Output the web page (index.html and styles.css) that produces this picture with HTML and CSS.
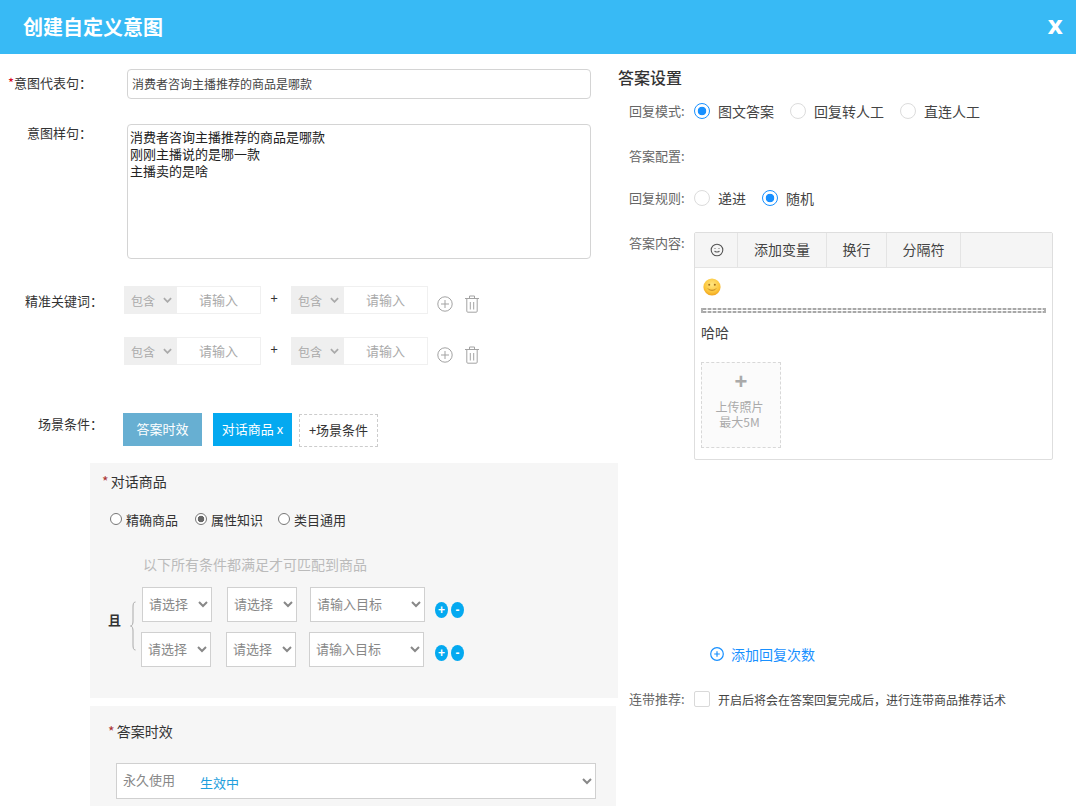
FILE: index.html
```html
<!DOCTYPE html>
<html lang="zh-CN">
<head>
<meta charset="utf-8">
<title>创建自定义意图</title>
<link rel="stylesheet" href="styles.css">
</head>
<body>
<div class="dialog">
  <header class="head">
    <h1 class="title">创建自定义意图</h1>
    <span class="close">x</span>
  </header>
  <div class="main">
    <section class="left">
      <div class="row row-rep">
        <label class="lbl lbl-a"><i class="req">*</i>意图代表句：</label>
        <input class="rep-input" type="text" value="消费者咨询主播推荐的商品是哪款">
      </div>
      <div class="row row-sample">
        <label class="lbl lbl-a">意图样句：</label>
        <textarea class="sample">消费者咨询主播推荐的商品是哪款
刚刚主播说的是哪一款
主播卖的是啥</textarea>
      </div>
      <div class="row row-kw">
        <label class="lbl lbl-b lbl-kw">精准关键词：</label>
        <div class="kw">
          <span class="kw-sel">包含<svg class="chev" viewBox="0 0 10 6"><path d="M1 1l4 4 4-4"/></svg></span><span class="kw-in">请输入</span>
        </div>
        <span class="kw-plus">+</span>
        <div class="kw">
          <span class="kw-sel">包含<svg class="chev" viewBox="0 0 10 6"><path d="M1 1l4 4 4-4"/></svg></span><span class="kw-in">请输入</span>
        </div>
        <svg class="ico-add" viewBox="0 0 16 16"><circle cx="8" cy="8" r="7.2"/><path d="M8 4v8M4 8h8"/></svg>
        <svg class="ico-del" viewBox="0 0 16 18"><path d="M1 3.5h14M5.5 3V1h5v2M2.8 4v12.2c0 .6.4 1 1 1h8.4c.6 0 1-.4 1-1V4M6.3 7v7.5M9.7 7v7.5"/></svg>
      </div>
      <div class="row row-kw row-kw2">
        <div class="kw">
          <span class="kw-sel">包含<svg class="chev" viewBox="0 0 10 6"><path d="M1 1l4 4 4-4"/></svg></span><span class="kw-in">请输入</span>
        </div>
        <span class="kw-plus">+</span>
        <div class="kw">
          <span class="kw-sel">包含<svg class="chev" viewBox="0 0 10 6"><path d="M1 1l4 4 4-4"/></svg></span><span class="kw-in">请输入</span>
        </div>
        <svg class="ico-add" viewBox="0 0 16 16"><circle cx="8" cy="8" r="7.2"/><path d="M8 4v8M4 8h8"/></svg>
        <svg class="ico-del" viewBox="0 0 16 18"><path d="M1 3.5h14M5.5 3V1h5v2M2.8 4v12.2c0 .6.4 1 1 1h8.4c.6 0 1-.4 1-1V4M6.3 7v7.5M9.7 7v7.5"/></svg>
      </div>
      <div class="row row-scene">
        <label class="lbl lbl-b lbl-scene">场景条件：</label>
        <span class="tag tag-time">答案时效</span>
        <span class="tag tag-goods">对话商品 x</span>
        <span class="tag tag-add">+场景条件</span>
      </div>
      <div class="panel panel-goods">
        <div class="p-title"><i>*</i> 对话商品</div>
        <div class="p-radios">
          <label class="p-radio"><input type="radio" name="goods">精确商品</label>
          <label class="p-radio"><input type="radio" name="goods" checked>属性知识</label>
          <label class="p-radio"><input type="radio" name="goods">类目通用</label>
        </div>
        <p class="hint">以下所有条件都满足才可匹配到商品</p>
        <div class="conds">
          <b class="qie">且</b>
          <svg class="brace" viewBox="0 0 6 50"><path d="M5.5 1C3.5 1 3 3 3 6v14c0 3-.8 5-2.5 5 1.700 0 2.500 2 2.500 5v14c0 3 .5 5 2.500 5"/></svg>
          <div class="cond-list">
            <div class="cond">
              <select class="s-a"><option>请选择</option></select>
              <select class="s-a"><option>请选择</option></select>
              <select class="s-b"><option>请输入目标</option></select>
              <span class="round">+</span><span class="round">-</span>
            </div>
            <div class="cond cond-2">
              <select class="s-a"><option>请选择</option></select>
              <select class="s-a"><option>请选择</option></select>
              <select class="s-b"><option>请输入目标</option></select>
              <span class="round">+</span><span class="round">-</span>
            </div>
          </div>
        </div>
      </div>
      <div class="panel panel-time">
        <div class="p-title"><i>*</i> 答案时效</div>
        <div class="time-wrap">
          <select class="s-time"><option>永久使用</option></select>
          <span class="live">生效中</span>
        </div>
      </div>
    </section>
    <section class="right">
      <h2 class="r-title">答案设置</h2>
      <div class="r-row r-mode">
        <span class="r-lbl">回复模式:</span>
        <label class="opt"><span class="dot on"></span>图文答案</label>
        <label class="opt"><span class="dot"></span>回复转人工</label>
        <label class="opt"><span class="dot"></span>直连人工</label>
      </div>
      <div class="r-row r-conf"><span class="r-lbl">答案配置:</span></div>
      <div class="r-row r-rule">
        <span class="r-lbl">回复规则:</span>
        <label class="opt"><span class="dot"></span>递进</label>
        <label class="opt"><span class="dot on"></span>随机</label>
      </div>
      <div class="r-content">
        <span class="r-lbl r-lbl-top">答案内容:</span>
        <div class="editor">
          <div class="tools">
            <span class="tool tool-emo"><svg viewBox="0 0 14 14"><circle cx="7" cy="7" r="5.800"/><path d="M4.600 7.800c.5 1.600 4.300 1.600 4.800 0M5 5.200v.9M9 5.200v.9"/></svg></span>
            <span class="tool tool-var">添加变量</span>
            <span class="tool tool-br">换行</span>
            <span class="tool tool-sep">分隔符</span>
          </div>
          <div class="edit-body">
            <svg class="emoji" viewBox="0 0 18 18">
              <defs><radialGradient id="face" cx="50%" cy="35%" r="70%"><stop offset="0" stop-color="#ffe680"/><stop offset="0.65" stop-color="#fcc53a"/><stop offset="1" stop-color="#ec9a17"/></radialGradient></defs>
              <circle cx="9" cy="9" r="8.600" fill="url(#face)"/>
              <circle cx="6.200" cy="6.800" r="1" fill="#a5701c"/><circle cx="11.800" cy="6.800" r="1" fill="#a5701c"/>
              <path d="M5 10.600c1.500 2.200 6.500 2.200 8 0" fill="none" stroke="#b97a1a" stroke-width=".9"/>
            </svg>
            <div class="rule"></div>
            <p class="say">哈哈</p>
            <div class="upload">
              <span class="up-plus">+</span>
              <span>上传照片</span>
              <span>最大5M</span>
            </div>
          </div>
        </div>
      </div>
      <div class="add-times">
        <svg viewBox="0 0 14 14"><circle cx="7" cy="7" r="6.300"/><path d="M4.200 7h5.600M7 4.200v5.600"/></svg>
        <span>添加回复次数</span>
      </div>
      <div class="r-row r-link">
        <span class="r-lbl">连带推荐:</span>
        <span class="check"></span>
        <span class="link-text">开启后将会在答案回复完成后，进行连带商品推荐话术</span>
      </div>
    </section>
  </div>
</div>
</body>
</html>
```
FILE: styles.css
```css
* { box-sizing: border-box; }
html, body { margin: 0; padding: 0; }
body {
  width: 1076px;
  height: 806px;
  overflow: hidden;
  background: #fff;
  color: #333;
  font-family: "Noto Sans CJK SC", "Liberation Sans", sans-serif;
  font-size: 13px;
}
.dialog { width: 1076px; height: 806px; overflow: hidden; }
.head {
  height: 54px;
  background: #38baf5;
  display: flex;
  align-items: center;
  justify-content: space-between;
  padding: 0 13px 0 23px;
  color: #fff;
}
.title { margin: 0; font-size: 20px; font-weight: 700; line-height: 30px; }
.close { font: 700 24px/24px "DejaVu Sans", sans-serif; margin-top: -3px; }
.main { display: flex; align-items: flex-start; }

/* left column */
.left { width: 618px; flex: none; padding-top: 15px; }
.row { display: flex; align-items: flex-start; }
.lbl { flex: none; font-size: 13px; line-height: 20px; color: #333; white-space: nowrap; }
.lbl-a { width: 127px; padding-right: 35px; text-align: right; }
.req { color: #d9001b; font-style: normal; }
.row-rep .lbl { padding-top: 4px; }
.rep-input {
  width: 464px;
  height: 30px;
  border: 1px solid #d4d4d4;
  border-radius: 4px;
  padding: 0 4px 2px;
  font: 12px "Noto Sans CJK SC", sans-serif;
  color: #444;
  outline: none;
}
.row-sample { margin-top: 25px; }
.row-sample .lbl { margin-top: -1px; }
.sample {
  width: 464px;
  height: 135px;
  border: 1px solid #d4d4d4;
  border-radius: 4px;
  padding: 3px 2px;
  font: 13px/17px "Noto Sans CJK SC", sans-serif;
  color: #222;
  resize: none;
  outline: none;
}
.row-kw { margin-top: 27px; height: 28px; align-items: center; }
.row-kw2 { margin-top: 23px; padding-left: 124px; }
.lbl-b { width: 124px; text-align: left; }
.lbl-kw { padding-left: 25px; margin-top: 1px; }
.kw {
  display: flex;
  width: 137px;
  height: 100%;
  border: 1px solid #f0f0f0;
  background: #fff;
}
.kw-sel {
  width: 53px;
  flex: none;
  background: #efefef;
  color: #aaa;
  font-size: 12px;
  display: flex;
  align-items: center;
  padding-left: 7px;
  margin: -1px 0 -1px -1px;
}
.chev { width: 9px; height: 6px; margin-left: 8px; fill: none; stroke: #aaa; stroke-width: 2; }
.kw-in { flex: 1; text-align: center; color: #aaa; font-size: 13px; line-height: 26px; }
.kw-plus { width: 30px; text-align: center; color: #333; font-size: 13px; margin-top: -6px; padding-right: 4px; }
.ico-add { width: 16px; height: 16px; margin: 8px 0 0 9px; fill: none; stroke: #a3a3a3; stroke-width: 1; }
.ico-del { width: 16px; height: 18px; margin: 8px 0 0 11px; fill: none; stroke: #a3a3a3; stroke-width: 1; }
.row-scene { margin-top: 48px; align-items: flex-start; }
.lbl-scene { width: 123px; padding-left: 38px; margin-top: 1px; }
.tag {
  width: 79px;
  height: 33px;
  line-height: 32px;
  text-align: center;
  font-size: 13px;
  flex: none;
}
.tag-time { background: #67afd2; color: #fff; }
.tag-goods { background: #04a9f0; color: #fff; margin-left: 11px; }
.tag-add {
  margin: 1px 0 0 7px;
  border: 1px dashed #ccc;
  color: #333;
  line-height: 29px;
}
.panel { background: #f6f6f6; margin-left: 90px; }
.panel-goods { width: 528px; height: 235px; margin-top: 16px; padding-top: 8px; }
.p-title { font-size: 14px; line-height: 20px; color: #333; padding-left: 12px; }
.p-title i { font-style: normal; color: #a33; margin-right: -1px; }
.p-radios { display: flex; margin-top: 18px; padding-left: 20px; height: 20px; }
.p-radio { display: flex; align-items: center; font-size: 13px; color: #333; margin-right: 15px; }
.p-radio:first-child { margin-right: 17px; }
.p-radio input {
  appearance: none;
  width: 12px;
  height: 12px;
  margin: 0 4px 0 0;
  border: 1px solid #777;
  border-radius: 50%;
  background: #fff;
}
.p-radio input:checked { background: radial-gradient(circle, #666 0 3px, #fff 3.6px); }
.hint { margin: 25px 0 0 53px; color: #bbb; font-size: 14px; line-height: 20px; }
.conds { display: flex; margin-top: 13px; align-items: center; height: 80px; }
.qie { width: 12px; margin: -15px 10px 0 18px; font-size: 13px; color: #333; }
.brace { width: 6px; height: 50px; flex: none; fill: none; stroke: #aaa; stroke-width: 1; margin-top: -3px; }
.cond-list { margin-left: 5px; }
.cond { display: flex; align-items: center; height: 35px; margin-left: 1px; }
.cond-2 { margin: 10px 0 0 0; }
.conds select, .s-time {
  border: 1px solid #d0d0d0;
  background-color: #fff;
  color: #888;
  font: 13px "Noto Sans CJK SC", sans-serif;
  border-radius: 0;
  outline: none;
}
.s-a { width: 70px; height: 35px; margin-right: 15px; padding: 0 0 2px 2px; }
.s-a + .s-a { margin-right: 13px; }
.s-b { width: 115px; height: 35px; margin-right: 10px; padding: 0 0 2px 2px; }
.cond-2 .s-b { margin-right: 11px; }
.round {
  width: 13px;
  height: 16px;
  border-radius: 50%;
  background: #04a9f0;
  color: #fff;
  font: 700 12px/16px "Liberation Sans", sans-serif;
  text-align: center;
  margin-right: 3px;
  margin-top: 11px;
}
.cond-2 .round { margin-top: 7px; }
.panel-time { width: 526px; height: 100px; margin-top: 8px; padding-top: 15px; }
.panel-time .p-title { padding-left: 18px; }
.time-wrap { position: relative; margin: 22px 0 0 26px; width: 480px; }
.s-time { width: 480px; height: 36px; padding: 0 0 3px 2px; display: block; }
.live { position: absolute; left: 84px; top: 11px; color: #1e9fdd; font-size: 13px; line-height: 18px; }

/* right column */
.right { flex: 1; padding-top: 13px; }
.r-title { margin: 0; font-size: 16px; font-weight: 500; line-height: 20px; color: #333; }
.r-row { display: flex; align-items: center; margin-left: 11px; height: 20px; }
.r-lbl { width: 65px; flex: none; font-size: 13px; color: #666; line-height: 20px; }
.opt { display: flex; align-items: center; font-size: 14px; color: #444; margin-right: 16px; }
.dot {
  width: 16px;
  height: 16px;
  border: 1px solid #dcdcdc;
  border-radius: 50%;
  margin-right: 8px;
  background: #fff;
  flex: none;
}
.dot.on { border-color: #1890ff; background: radial-gradient(circle, #1890ff 0 4px, #fff 4.600px); }
.r-mode { margin-top: 14px; }
.r-conf { margin-top: 25px; }
.r-rule { margin-top: 22px; }
.r-content { display: flex; margin: 24px 0 0 11px; }
.r-lbl-top { margin-top: 1px; }
.editor { width: 359px; height: 228px; border: 1px solid #dedede; border-radius: 2px; }
.tools {
  display: flex;
  height: 35px;
  background: #f5f5f5;
  border-bottom: 1px solid #e4e4e4;
}
.tool {
  display: flex;
  align-items: center;
  justify-content: center;
  font-size: 14px;
  color: #444;
  border-right: 1px solid #e4e4e4;
  padding-bottom: 2px;
}
.tool-emo { width: 43px; padding: 0 0 0 2px; }
.tool-emo svg { width: 14px; height: 14px; fill: none; stroke: #555; stroke-width: 1.100; }
.tool-var { width: 89px; }
.tool-br { width: 60px; }
.tool-sep { width: 74px; }
.edit-body { padding: 10px 6px 0; }
.emoji { display: block; width: 18px; height: 18px; margin-left: 2px; }
.rule {
  height: 5px;
  margin-top: 12px;
  border-left: 2px solid #b0b0b0;
  border-right: 2px solid #b0b0b0;
  background:
    repeating-linear-gradient(90deg, #a8a8a8 0 3px, #dedede 3px 5px) top / 100% 2px no-repeat,
    repeating-linear-gradient(90deg, #a8a8a8 0 3px, #dedede 3px 5px) bottom / 100% 2px no-repeat;
}
.say { margin: 9px 0 0; font-size: 14px; line-height: 20px; color: #444; }
.upload {
  width: 80px;
  height: 86px;
  margin-top: 20px;
  border: 1px dashed #d8d8d8;
  background: #fbfbfb;
  color: #aaa;
  font-size: 12px;
  line-height: 15px;
  display: flex;
  flex-direction: column;
  align-items: center;
  padding: 9px 3px 0 0;
}
.up-plus { font: 700 22px/20px "Liberation Sans", sans-serif; margin: 0 -3px 7px 0; color: #aaa; }
.add-times {
  display: flex;
  align-items: center;
  margin: 184px 0 0 92px;
  height: 20px;
  color: #1890ff;
  font-size: 14px;
}
.add-times svg { width: 14px; height: 14px; margin-right: 7px; fill: none; stroke: #1890ff; stroke-width: 1.200; }
.r-link { margin-top: 25px; }
.check { width: 16px; height: 16px; border: 1px solid #d9d9d9; border-radius: 2px; background: #fff; margin-right: 8px; flex: none; }
.link-text { font-size: 12px; color: #444; }
```
